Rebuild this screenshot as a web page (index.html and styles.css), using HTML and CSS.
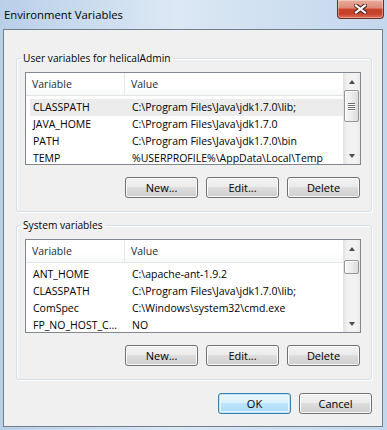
FILE: index.html
```html
<!DOCTYPE html>
<html lang="en">
<head>
    <meta charset="UTF-8">
    <meta name="viewport" content="width=device-width, initial-scale=1.0">
    <title>Environment Variables</title>
    <link rel="stylesheet" href="styles.css">
</head>
<body>
    <div class="window">
        <div class="titlebar">
            <span class="title">Environment Variables</span>
            <div class="close">
                <svg width="13" height="10" viewBox="0 0 13 10">
                    <path d="M2 1.5 L11 8.5 M11 1.5 L2 8.5" stroke="#4a2220" stroke-width="4.2" stroke-linecap="square"/>
                    <path d="M2 1.5 L11 8.5 M11 1.5 L2 8.5" stroke="#ffffff" stroke-width="2.2" stroke-linecap="square"/>
                </svg>
            </div>
        </div>
        <div class="client">
            <fieldset class="group">
                <legend>User variables for helicalAdmin</legend>
                <div class="list">
                    <div class="list-body">
                        <div class="list-header">
                            <div class="col-var">Variable</div>
                            <div class="col-val">Value</div>
                        </div>
                        <div class="rows">
                            <div class="row selected"><div class="col-var">CLASSPATH</div><div class="col-val">C:\Program Files\Java\jdk1.7.0\lib;</div></div>
                            <div class="row"><div class="col-var">JAVA_HOME</div><div class="col-val">C:\Program Files\Java\jdk1.7.0</div></div>
                            <div class="row"><div class="col-var">PATH</div><div class="col-val">C:\Program Files\Java\jdk1.7.0\bin</div></div>
                            <div class="row"><div class="col-var">TEMP</div><div class="col-val">%USERPROFILE%\AppData\Local\Temp</div></div>
                        </div>
                    </div>
                    <div class="scrollbar">
                        <div class="arrow up"></div>
                        <div class="track"><div class="thumb big"><span></span><span></span><span></span><span></span></div></div>
                        <div class="arrow down"></div>
                    </div>
                </div>
                <div class="buttons">
                    <button class="btn">New...</button>
                    <button class="btn">Edit...</button>
                    <button class="btn">Delete</button>
                </div>
            </fieldset>

            <fieldset class="group system">
                <legend>System variables</legend>
                <div class="list tall">
                    <div class="list-body">
                        <div class="list-header">
                            <div class="col-var">Variable</div>
                            <div class="col-val">Value</div>
                        </div>
                        <div class="rows">
                            <div class="row"><div class="col-var">ANT_HOME</div><div class="col-val">C:\apache-ant-1.9.2</div></div>
                            <div class="row"><div class="col-var">CLASSPATH</div><div class="col-val">C:\Program Files\Java\jdk1.7.0\lib;</div></div>
                            <div class="row"><div class="col-var">ComSpec</div><div class="col-val">C:\Windows\system32\cmd.exe</div></div>
                            <div class="row"><div class="col-var">FP_NO_HOST_C...</div><div class="col-val">NO</div></div>
                        </div>
                    </div>
                    <div class="scrollbar">
                        <div class="arrow up"></div>
                        <div class="track"><div class="thumb small"></div></div>
                        <div class="arrow down"></div>
                    </div>
                </div>
                <div class="buttons">
                    <button class="btn">New...</button>
                    <button class="btn">Edit...</button>
                    <button class="btn">Delete</button>
                </div>
            </fieldset>

            <div class="dialog-buttons">
                <button class="btn default">OK</button>
                <button class="btn">Cancel</button>
            </div>
        </div>
    </div>
</body>
</html>
```

FILE: styles.css
```css
body {
    margin: 0;
    padding: 0;
    font-family: "Open Sans", "Liberation Sans", sans-serif;
    font-size: 11px;
    color: black;
    background-color: #c4d7ed;
}
.window {
    width: 387px;
    height: 430px;
    display: flex;
    flex-direction: column;
    background: linear-gradient(to right, #b9cfe8 0%, #c8daee 20%, #dce8f4 45%, #d0e0f1 70%, #c3d7ed 100%);
}
.titlebar {
    height: 29px;
    display: flex;
    justify-content: space-between;
    align-items: flex-start;
}
.title {
    padding: 6px 0 0 4px;
    line-height: 17px;
    font-size: 11.3px;
}
.close {
    width: 45px;
    height: 18px;
    margin-right: 3px;
    border: 1px solid #6b2d25;
    border-top: none;
    border-radius: 0 0 4px 4px;
    background: linear-gradient(#e9ab9b 0%, #dd8b77 45%, #c9442c 50%, #c6412a 75%, #dc6e54 100%);
    box-shadow: inset 0 0 0 1px rgba(255, 255, 255, 0.35);
    display: flex;
    align-items: center;
    justify-content: center;
}
.client {
    flex: 1;
    margin: 0 4px 3px 3px;
    border: 1px solid #6f7d8c;
    background-color: #f0f0f0;
    display: flex;
    flex-direction: column;
}
.group {
    margin: 21px 10px 0 12px;
    padding: 6px 10px 13px 8px;
    border: 1px solid #d5dfe5;
    border-radius: 3px;
    box-shadow: inset 1px 1px 0 #fff, 1px 1px 0 #fff;
}
.group.system {
    margin-top: 6px;
}
.group legend {
    padding: 0 2px;
    margin-left: -4px;
    line-height: 15px;
    font-size: 10.2px;
}
.list {
    height: 91px;
    border: 1px solid #828790;
    background-color: white;
    display: flex;
    overflow: hidden;
    font-size: 10.5px;
}
.list.tall {
    height: 92px;
}
.list-body {
    flex: 1;
    overflow: hidden;
}
.list-header {
    height: 22px;
    display: flex;
    border-bottom: 1px solid #e5e5e5;
    background: linear-gradient(#ffffff 0%, #ffffff 60%, #f7f8f9 100%);
    color: #1e2a3a;
}
.list-header .col-var {
    width: 92px;
    padding-left: 6px;
    border-right: 1px solid #e3e8ee;
    line-height: 23px;
}
.list-header .col-val {
    padding-left: 6px;
    line-height: 23px;
}
.rows {
    padding: 3px 0 0 4px;
}
.row {
    height: 17px;
    display: flex;
    line-height: 17px;
    white-space: nowrap;
}
.row.selected {
    background-color: #ececec;
}
.row .col-var {
    width: 96px;
    padding-left: 3px;
    box-sizing: border-box;
    overflow: hidden;
}
.row .col-val {
    padding-left: 6px;
}
.scrollbar {
    width: 17px;
    display: flex;
    flex-direction: column;
    background: linear-gradient(to right, #e2e2e2 0%, #f1f1f1 25%, #f3f3f3 75%, #e9e9e9 100%);
}
.arrow {
    height: 17px;
    display: flex;
    align-items: center;
    justify-content: center;
}
.arrow::before {
    content: "";
    width: 0;
    height: 0;
    border-left: 3.5px solid transparent;
    border-right: 3.5px solid transparent;
}
.arrow.up::before {
    border-bottom: 4px solid #4d4d4d;
}
.arrow.down::before {
    border-top: 4px solid #4d4d4d;
}
.track {
    flex: 1;
    padding: 0 1px;
}
.thumb {
    border: 1px solid #959595;
    border-radius: 2px;
    background: linear-gradient(to right, #f5f5f5 0%, #ececec 50%, #dcdcdc 100%);
    box-shadow: inset 1px 1px 0 #fff;
    display: flex;
    flex-direction: column;
    align-items: center;
    justify-content: center;
    gap: 1px;
}
.thumb.big {
    height: 30px;
}
.thumb.small {
    height: 12px;
    margin-top: 3px;
}
.thumb span {
    width: 7px;
    height: 1px;
    background-color: #6f6f6f;
    box-shadow: 0 1px 0 #fff;
}
.buttons {
    display: flex;
    justify-content: flex-end;
    gap: 8px;
    margin-top: 12px;
    padding-right: 1px;
}
.btn {
    width: 73px;
    height: 21px;
    padding: 0;
    font-family: "Open Sans", "Liberation Sans", sans-serif;
    font-size: 11px;
    color: black;
    border: 1px solid #707070;
    border-radius: 3px;
    background: linear-gradient(#f2f2f2 0%, #ebebeb 48%, #dddddd 50%, #cfcfcf 100%);
    box-shadow: inset 0 0 0 1px #fcfcfc;
}
.btn.default {
    border-color: #3c7fb1;
    background: linear-gradient(#eaf6fd 0%, #d9f0fc 48%, #bee6fd 50%, #a7d9f5 100%);
    box-shadow: inset 0 0 0 1px #b8e3f9, inset 0 0 0 2px #e9f6fd;
}
.dialog-buttons {
    display: flex;
    justify-content: flex-end;
    gap: 8px;
    margin: 13px 10px 0 0;
}
```
